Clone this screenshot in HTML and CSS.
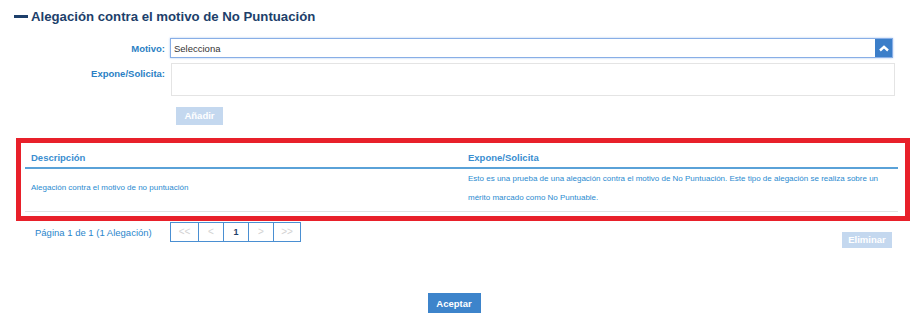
FILE: index.html
```html
<!DOCTYPE html>
<html lang="es">
<head>
    <meta charset="UTF-8">
    <meta name="viewport" content="width=device-width, initial-scale=1.0">
    <title>Alegación contra el motivo de No Puntuación</title>
    <link rel="stylesheet" href="styles.css">
</head>
<body>
    <div class="section-title">
        <span class="dash"></span>
        <h2>Alegación contra el motivo de No Puntuación</h2>
    </div>
    <div class="form">
        <div class="form-row">
            <label>Motivo:</label>
            <div class="select">
                <span class="select-text">Selecciona</span>
                <span class="select-arrow">
                    <svg width="10" height="7" viewBox="0 0 10 7"><path d="M1 5.5 L5 1.8 L9 5.5" fill="none" stroke="#fff" stroke-width="2.4"/></svg>
                </span>
            </div>
        </div>
        <div class="form-row">
            <label>Expone/Solicita:</label>
            <div class="textarea"></div>
        </div>
        <div class="form-actions">
            <button class="btn btn-disabled">Añadir</button>
        </div>
    </div>
    <div class="highlight">
        <table class="grid">
            <thead>
                <tr>
                    <th class="col-desc">Descripción</th>
                    <th>Expone/Solicita</th>
                </tr>
            </thead>
            <tbody>
                <tr>
                    <td>Alegación contra el motivo de no puntuación</td>
                    <td>Esto es una prueba de una alegación contra el motivo de No Puntuación. Este tipo de alegación se realiza sobre un mérito marcado como No Puntuable.</td>
                </tr>
            </tbody>
        </table>
    </div>
    <div class="pager-row">
        <span class="pager-info">Página 1 de 1 (1 Alegación)</span>
        <div class="pager">
            <span class="pg pg-first">&lt;&lt;</span>
            <span class="pg pg-prev">&lt;</span>
            <span class="pg pg-current">1</span>
            <span class="pg pg-next">&gt;</span>
            <span class="pg pg-last">&gt;&gt;</span>
        </div>
        <button class="btn btn-disabled btn-delete">Eliminar</button>
    </div>
    <div class="footer">
        <button class="btn btn-primary">Aceptar</button>
    </div>
</body>
</html>
```

FILE: styles.css
```css
body {
    margin: 0;
    font-family: "Liberation Sans", Arial, sans-serif;
    background-color: #fff;
    color: #2b86cc;
}
.section-title {
    display: flex;
    align-items: center;
    padding: 7px 0 0 14px;
    height: 19px;
}
.dash {
    width: 14px;
    height: 3px;
    background-color: #1d3f6b;
    margin-right: 3px;
}
.section-title h2 {
    margin: 0;
    font-size: 13.2px;
    font-weight: bold;
    color: #1d3f6b;
}
.form {
    margin-top: 12px;
}
.form-row {
    display: flex;
    align-items: flex-start;
    margin-bottom: 5px;
}
.form-row label {
    width: 170px;
    text-align: right;
    font-size: 9.5px;
    font-weight: bold;
    color: #2b7fc4;
    padding-top: 5px;
    padding-right: 5px;
    box-sizing: border-box;
}
.select {
    display: flex;
    align-items: stretch;
    width: 723px;
    height: 20px;
    border: 1px solid #88aee6;
    box-shadow: 0 0 2px #a9c6f0;
    box-sizing: border-box;
}
.select-text {
    flex-grow: 1;
    font-size: 9.5px;
    color: #333;
    padding: 4px 0 0 3px;
}
.select-arrow {
    width: 17px;
    background-color: #3b7ec9;
    display: flex;
    align-items: center;
    justify-content: center;
}
.textarea {
    width: 724px;
    height: 33px;
    margin-left: 1px;
    border: 1px solid #e4e4e4;
    box-sizing: border-box;
}
.form-actions {
    padding-left: 176px;
    margin-top: 9px;
}
.btn {
    border: none;
    font-family: "Liberation Sans", Arial, sans-serif;
    font-size: 9.5px;
    font-weight: bold;
    color: #fff;
    cursor: pointer;
}
.btn-disabled {
    background-color: #c4d8ef;
    width: 47px;
    height: 18px;
    padding: 0;
}
.btn-primary {
    background-color: #3d84cb;
    width: 53px;
    height: 20px;
    padding: 0;
}
.highlight {
    margin: 13px 0 0 16px;
    width: 894px;
    height: 83px;
    border: 5px solid #e8202a;
    box-sizing: border-box;
    padding: 0 7px 0 4px;
}
.grid {
    width: 100%;
    border-collapse: collapse;
    table-layout: fixed;
    color: #2b8bd0;
}
.grid th {
    text-align: left;
    font-size: 9.5px;
    font-weight: bold;
    color: #3a8ed0;
    padding: 9px 6px 4px 6px;
    border-bottom: 2px solid #5aa2d8;
}
.grid .col-desc {
    width: 425px;
}
.grid td {
    font-size: 8px;
    line-height: 19px;
    padding: 0 6px 4px 6px;
    border-bottom: 1px solid #e2e2e2;
    vertical-align: middle;
}
.pager-row {
    display: flex;
    align-items: flex-start;
    margin-top: 1px;
    padding-left: 35px;
}
.pager-info {
    font-size: 9.5px;
    color: #2b86cc;
    width: 135px;
    padding-top: 5px;
}
.pager {
    display: flex;
    border: 1px solid #4a8fd2;
    height: 20px;
    box-sizing: border-box;
}
.pg {
    width: 24px;
    border-left: 1px solid #4a8fd2;
    font-size: 10px;
    color: #d3d3d3;
    display: flex;
    align-items: center;
    justify-content: center;
}
.pg-first {
    border-left: none;
    width: 27px;
}
.pg-last {
    width: 26px;
}
.pg-current {
    color: #1d3f6b;
    font-weight: bold;
    font-size: 9px;
}
.btn-delete {
    margin-left: auto;
    margin-right: 24px;
    margin-top: 10px;
    width: 50px;
    height: 16px;
}
.footer {
    text-align: center;
    margin-top: 45px;
    padding-right: 8px;
}
```
